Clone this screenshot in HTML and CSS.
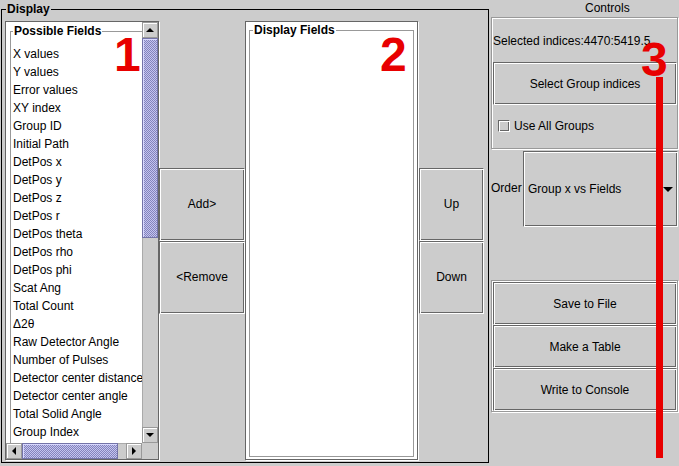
FILE: index.html
```html
<!DOCTYPE html>
<html>
<head>
<meta charset="utf-8">
<title>Display</title>
<link rel="stylesheet" href="styles.css">
</head>
<body>
<div class="app">
  <div class="display-group">
    <span class="group-title">Display</span>
    <div class="scrollpane">
      <div class="sp-main">
        <div class="viewport">
          <div class="titled wide">
            <span class="titled-label">Possible Fields</span>
            <ul class="items">
              <li>X values</li>
              <li>Y values</li>
              <li>Error values</li>
              <li>XY index</li>
              <li>Group ID</li>
              <li>Initial Path</li>
              <li>DetPos x</li>
              <li>DetPos y</li>
              <li>DetPos z</li>
              <li>DetPos r</li>
              <li>DetPos theta</li>
              <li>DetPos rho</li>
              <li>DetPos phi</li>
              <li>Scat Ang</li>
              <li>Total Count</li>
              <li>Δ2θ</li>
              <li>Raw Detector Angle</li>
              <li>Number of Pulses</li>
              <li>Detector center distance</li>
              <li>Detector center angle</li>
              <li>Total Solid Angle</li>
              <li>Group Index</li>
            </ul>
          </div>
        </div>
        <div class="vscroll">
          <div class="arrow up"></div>
          <div class="thumb vthumb"></div>
          <div class="track"></div>
          <div class="arrow down"></div>
        </div>
      </div>
      <div class="sp-bottom">
        <div class="hscroll">
          <div class="arrow left"></div>
          <div class="thumb hthumb"></div>
          <div class="track"></div>
          <div class="arrow right"></div>
        </div>
        <div class="corner"></div>
      </div>
    </div>
    <div class="btncol addcol">
      <button class="btn tall">Add&gt;</button>
      <button class="btn tall">&lt;Remove</button>
    </div>
    <div class="listbox">
      <div class="titled full">
        <span class="titled-label shifted">Display Fields</span>
      </div>
    </div>
    <div class="btncol updown">
      <button class="btn tall">Up</button>
      <button class="btn tall">Down</button>
    </div>
  </div>

  <div class="controls">
    <div class="controls-title">Controls</div>
    <div class="etched grid3">
      <div class="label-row">Selected indices:4470:5419.5</div>
      <button class="btn">Select Group indices</button>
      <div class="check-row"><span class="checkbox"></span><span>Use All Groups</span></div>
    </div>
    <div class="order-row">
      <span class="order-label">Order</span>
      <div class="combo">
        <span>Group x vs Fields</span>
        <svg class="combo-arrow" width="10" height="5" viewBox="0 0 10 5"><polygon points="0,0 10,0 5,5" fill="#000"/></svg>
      </div>
    </div>
    <div class="etched grid3 actions">
      <button class="btn">Save to File</button>
      <button class="btn">Make a Table</button>
      <button class="btn">Write to Console</button>
    </div>
  </div>

  <div class="mark m1">1</div>
  <div class="mark m2">2</div>
  <div class="mark m3">3</div>
  <div class="red-line"></div>
</div>
</body>
</html>
```

FILE: styles.css
```css
* { box-sizing: border-box; }
html, body { margin: 0; padding: 0; }
body {
  background: #cccccc;
  font-family: "Liberation Sans", Arial, sans-serif;
  font-size: 12px;
  color: #000;
}
.app {
  position: relative;
  width: 679px;
  height: 466px;
  display: flex;
  align-items: flex-start;
  overflow: hidden;
}

/* Display group */
.display-group {
  position: relative;
  margin: 9px 0 0 1px;
  width: 488px;
  height: 454px;
  border: 1px solid #000;
  display: flex;
  padding: 11px 4px 2px 3px;
  flex: none;
}
.group-title {
  position: absolute;
  top: -8px;
  left: 4px;
  padding: 0 1px;
  background: #cccccc;
  font-weight: bold;
  line-height: 14px;
}

/* scroll pane */
.scrollpane {
  width: 154px;
  height: 439px;
  border: 1px solid #666;
  box-shadow: 1px 1px 0 #fff;
  display: flex;
  flex-direction: column;
  flex: none;
}
.sp-main {
  display: flex;
  height: 421px;
}
.viewport {
  width: 136px;
  height: 421px;
  background: #fff;
  overflow: hidden;
  position: relative;
}
.titled {
  position: relative;
  border: 1px solid #999;
}
.titled.wide {
  margin: 9px 0 0 4px;
  width: 240px;
  height: 440px;
  padding: 13px 0 0 2px;
}
.titled.full {
  height: 100%;
}
.titled-label {
  position: absolute;
  top: -8px;
  left: 2px;
  padding: 0 1px;
  background: #fff;
  font-weight: bold;
  line-height: 14px;
  white-space: nowrap;
}
.titled-label.shifted { left: 3px; }
.items {
  list-style: none;
  margin: 0;
  padding: 0;
}
.items li {
  line-height: 18px;
  height: 18px;
  white-space: nowrap;
}

.vscroll {
  width: 16px;
  display: flex;
  flex-direction: column;
}
.arrow {
  flex: none;
  width: 16px;
  height: 16px;
  background: #cccccc;
  border: 1px solid #999;
  box-shadow: inset 1px 1px 0 #fff;
  display: flex;
  align-items: center;
  justify-content: center;
}
.arrow::after {
  content: "";
  width: 0;
  height: 0;
}
.arrow.up::after {
  border-left: 4px solid transparent;
  border-right: 4px solid transparent;
  border-bottom: 4px solid #000;
}
.arrow.down::after {
  border-left: 4px solid transparent;
  border-right: 4px solid transparent;
  border-top: 4px solid #000;
}
.arrow.left::after {
  border-top: 4px solid transparent;
  border-bottom: 4px solid transparent;
  border-right: 4px solid #000;
}
.arrow.right::after {
  border-top: 4px solid transparent;
  border-bottom: 4px solid transparent;
  border-left: 4px solid #000;
}
.thumb {
  flex: none;
  background-color: #9c9cd0;
  background-image: repeating-conic-gradient(#c4c4f0 0 25%, #8484bc 0 50%);
  background-size: 2px 2px;
  border: 1px solid #7474a8;
  box-shadow: inset 1px 1px 0 #d8d8ff;
}
.vthumb { height: 200px; }
.hthumb { width: 96px; height: 16px; }
.track {
  flex: 1;
  background: #cccccc;
}
.vscroll .track { border-left: 1px solid #aaa; }
.hscroll .track { border-top: 1px solid #aaa; }
.sp-bottom {
  display: flex;
  height: 16px;
}
.hscroll {
  width: 136px;
  display: flex;
}
.corner {
  width: 16px;
  height: 16px;
  background: #cccccc;
}

/* buttons */
.btn {
  font-family: "Liberation Sans", Arial, sans-serif;
  font-size: 12px;
  color: #000;
  background: #cccccc;
  padding: 0;
  margin: 0;
  border: 1px solid;
  border-color: #666 #fff #fff #666;
  box-shadow: inset 1px 1px 0 #fff, inset -1px -1px 0 #666;
  white-space: nowrap;
}
.btncol {
  display: flex;
  flex-direction: column;
  justify-content: center;
  height: 439px;
  flex: none;
}
.addcol { width: 86px; }
.updown { width: 65px; margin-left: 1px; }
.btn.tall { height: 73px; width: 100%; }

.listbox {
  width: 173px;
  height: 439px;
  flex: none;
  background: #fff;
  border: 1px solid #666;
  box-shadow: 1px 1px 0 #fff;
  padding: 8px 3px 2px 3px;
}

/* controls */
.controls {
  width: 190px;
  flex: none;
  display: flex;
  flex-direction: column;
  padding-left: 2px;
}
.controls-title {
  height: 17px;
  line-height: 16px;
  padding-left: 94px;
  white-space: nowrap;
}
.etched {
  width: 187px;
  border: 1px solid #999;
  box-shadow: inset 1px 1px 0 #fff, 1px 1px 0 #fff;
  padding: 1px 0 0 1px;
}
.grid3 {
  display: grid;
  grid-template-rows: repeat(3, 43px);
}
.label-row {
  display: flex;
  align-items: center;
  white-space: nowrap;
  overflow: hidden;
}
.check-row {
  display: flex;
  align-items: center;
  padding-left: 5px;
  padding-bottom: 2px;
}
.checkbox {
  width: 12px;
  height: 12px;
  margin-right: 4px;
  border: 1px solid;
  border-color: #666 #fff #fff #666;
  box-shadow: inset 1px 1px 0 #fff, inset -1px -1px 0 #666;
  background: #cccccc;
}
.order-row {
  display: flex;
  align-items: center;
  margin-top: 1px;
  height: 77px;
}
.order-label {
  width: 32px;
  margin-bottom: 2px;
  white-space: nowrap;
}
.combo {
  width: 155px;
  height: 76px;
  margin-top: 1px;
  border: 1px solid;
  border-color: #666 #fff #fff #666;
  box-shadow: inset 1px 1px 0 #fff, inset -1px -1px 0 #666;
  display: flex;
  align-items: center;
  justify-content: space-between;
  padding: 0 4px 0 4px;
  white-space: nowrap;
}
.actions {
  margin-top: 53px;
}

/* annotations */
.mark {
  position: absolute;
  color: #e80000;
  font-family: "Liberation Sans", Arial, sans-serif;
  font-weight: bold;
  font-size: 48px;
  line-height: 48px;
}
.m1 { left: 114px; top: 31px; }
.m2 { left: 380px; top: 31px; }
.m3 { left: 641px; top: 36px; }
.red-line {
  position: absolute;
  left: 656px;
  top: 77px;
  width: 7px;
  height: 381px;
  background: #e80000;
}
```
